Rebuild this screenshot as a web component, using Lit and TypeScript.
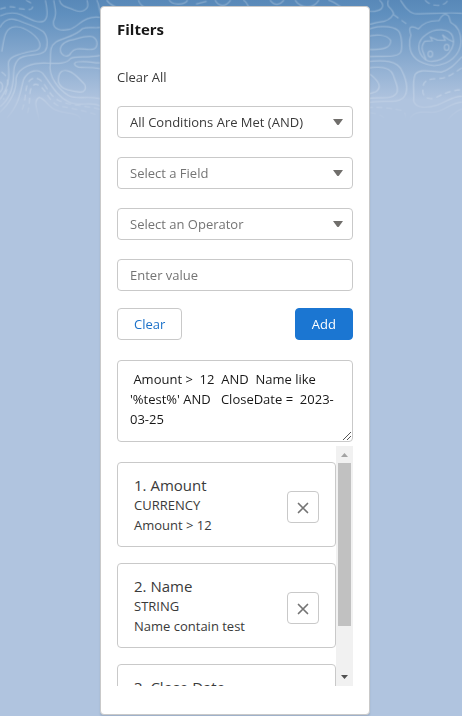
import { LitElement, html, css, svg } from "lit";
import { customElement, property, state } from "lit/decorators.js";

interface Condition {
  label: string;
  type: string;
  summary: string;
}

@customElement("page-backdrop")
export class PageBackdrop extends LitElement {
  static styles = css`
    :host {
      display: block;
      position: absolute;
      inset: 0;
      background: linear-gradient(#5888b8 0, #5f8fbe 14px, #b0c4df 100px);
    }
    .contours {
      display: block;
      width: 100%;
      height: 130px;
      fill: none;
    }
    .dash {
      stroke-dasharray: 18 11;
    }
  `;

  render() {
    return html`<svg class="contours" viewBox="0 0 462 130" preserveAspectRatio="xMidYMin slice" aria-hidden="true">
      <defs>
        <linearGradient id="fade" x1="0" y1="0" x2="0" y2="130" gradientUnits="userSpaceOnUse">
          <stop offset="0" stop-color="#fff" stop-opacity=".28" />
          <stop offset=".7" stop-color="#fff" stop-opacity=".28" />
          <stop offset=".95" stop-color="#fff" stop-opacity="0" />
        </linearGradient>
        <mask id="lines" maskUnits="userSpaceOnUse" x="0" y="0" width="462" height="130">
          <rect width="462" height="130" fill="url(#fade)" />
        </mask>
      </defs>
      <g mask="url(#lines)" stroke="#fff" stroke-width="3.5">
        ${svg`
        <g transform="scale(.33333)">
          <path class="dash" d="M0 27C25 20 38 17 52 25C75 28 100 35 98 16C96 8 84 5 78 0" />
          <path d="M0 48C20 38 45 36 65 45C90 57 112 70 130 64C146 56 142 30 136 0" />
          <path d="M0 82C10 62 28 52 50 60C75 70 108 78 130 95C145 112 144 140 135 153C115 172 75 158 55 178C30 205 50 235 30 280C22 298 10 312 0 320" />
          <path d="M5 155C12 125 10 82 46 80C72 78 120 110 120 137C118 158 95 150 75 158C48 165 22 172 25 195C27 225 32 250 0 298" />
          <path d="M178 0C184 24 206 20 222 30C243 40 267 30 263 10L261 0" />
          <path d="M161 0C165 28 172 38 160 65C158 92 188 92 208 88C235 82 250 45 300 52" />
          <path d="M0 337C32 305 50 270 48 235C55 200 100 188 135 189C165 190 198 194 211 176C225 166 265 175 300 166" />
          <path d="M151 188C152 155 148 140 168 126C190 112 225 110 247 86C266 78 284 86 300 82" />
          <path d="M184 160C174 142 189 127 209 121C230 118 255 105 278 110C297 121 294 146 276 148C253 151 228 137 213 158C207 172 192 171 184 160Z" />
          <path d="M151 190C143 230 178 270 205 286C229 300 258 286 300 296" />
          <path d="M175 245C174 216 187 207 205 213C226 219 236 236 253 252C261 267 252 278 238 276C216 272 182 271 175 245Z" />
          <path d="M300 206C270 200 251 204 235 201C216 195 222 184 240 185C267 182 287 191 300 188" />
          <path d="M20 355C58 313 60 278 70 240C83 210 117 203 132 225C153 254 172 290 205 305C235 322 275 302 300 318" />
          <path class="dash" d="M66 330C83 289 69 240 103 234C133 233 139 278 169 297C199 317 248 314 300 328" />
          <path class="dash" d="M82 340C95 302 80 260 107 252C137 258 139 299 174 317C218 326 250 330 300 348" />
          <path d="M118 370C115 332 96 304 117 292C137 296 144 323 170 331C205 345 249 333 241 372" />
          <path class="dash" d="M4 216C27 230 30 250 10 298" />
          <path d="M0 245C11 253 9 269 0 277M290 0C303 23 292 42 316 58" />
        </g>
        <g transform="translate(100 0) scale(.33333)">
          <path d="M20 0C34 24 52 12 68 40M115 0C124 27 150 26 180 30M207 0C215 15 253 17 263 0M288 12L320 4M345 0C355 21 378 21 392 0M430 0C446 9 444 30 462 35M510 0C524 20 541 14 552 0M585 0C600 23 638 30 657 0M685 0C718 10 738 40 756 35" />
        </g>
        <g transform="translate(360 0) scale(.33333)">
          <path d="M58 0C81 20 63 36 28 34M85 0C77 24 95 20 101 41C93 57 78 65 58 66C40 67 38 75 20 72M121 0C134 20 145 37 163 41C205 44 260 35 306 40" />
          <path class="dash" d="M101 44L140 72M195 0C211 21 254 22 264 0" />
          <path d="M20 110C46 102 80 102 92 121C94 142 72 151 24 148M20 92C38 78 96 73 116 93C126 107 128 148 121 158C107 175 58 166 20 170" />
          <path d="M20 185C70 179 114 180 127 215C141 244 147 277 129 294C107 313 65 297 20 309M20 205C63 197 92 200 100 226C107 248 119 269 108 282C90 302 53 288 20 297M30 222C60 246 65 263 48 275L25 282" />
          <path d="M153 105C144 81 150 74 175 87C189 68 211 61 237 62C244 46 255 36 266 48L272 67C294 78 303 98 303 126C301 164 268 195 222 197C176 191 151 170 149 137C148 125 149 114 153 105Z" />
          <path d="M195 178C169 156 170 122 199 103C225 83 268 85 278 109C290 143 257 181 217 184C208 185 201 182 195 178Z" />
          <path d="M188 153C184 142 187 133 194 124L217 122L211 111L232 120L256 121L247 104L265 118L281 126M188 153L198 179" />
          <ellipse cx="211" cy="162" rx="7" ry="9" />
          <ellipse cx="260" cy="142" rx="7" ry="9" />
          <path d="M306 170C284 193 269 210 244 216C213 215 181 205 166 222C155 249 164 271 161 303C167 325 199 325 232 315C261 305 282 286 306 289" />
          <path class="dash" d="M306 204C276 222 260 236 232 236C204 236 186 245 190 263C182 286 201 302 226 294C251 280 276 271 306 269" />
          <path d="M150 370C146 338 177 334 211 337C250 340 266 308 306 306M258 370C269 347 285 335 306 326" />
          <path class="dash" d="M20 323C60 319 87 325 114 329C137 331 141 347 133 362M30 338C57 342 73 348 78 363" />
        </g>`}
      </g>
    </svg>`;
  }
}

@customElement("filter-select")
export class FilterSelect extends LitElement {
  @property() label = "";
  @property({ type: Boolean }) placeholder = false;
  @property({ attribute: false }) options: string[] = [];

  static styles = css`
    :host {
      display: grid;
      align-items: center;
    }
    .control,
    .caret {
      grid-area: 1 / 1;
    }
    .control {
      appearance: none;
      width: 100%;
      height: 32px;
      margin: 0;
      padding: 0 32px 0 12px;
      border: 1px solid #c9c9c9;
      border-radius: 4px;
      background: #fff;
      color: #3a3a3a;
      font: inherit;
    }
    .empty {
      color: #747474;
    }
    .caret {
      justify-self: end;
      width: 10px;
      height: 6px;
      margin-right: 10px;
      fill: #706e6b;
      pointer-events: none;
    }
  `;

  render() {
    return html`
      <select class="control ${this.placeholder ? "empty" : ""}" aria-label=${this.label}>
        ${this.options.map((o) => html`<option>${o}</option>`)}
      </select>
      <svg class="caret" viewBox="0 0 10 6" aria-hidden="true"><path d="M0 0H10L6 5.5Q5 6.5 4 5.5Z" /></svg>
    `;
  }
}

@customElement("condition-card")
export class ConditionCard extends LitElement {
  @property({ type: Number }) index = 1;
  @property({ attribute: false }) condition!: Condition;

  static styles = css`
    :host {
      display: flex;
      align-items: center;
      justify-content: space-between;
      flex: none;
      box-sizing: border-box;
      height: 85px;
      padding: 4px 16px 0;
      border: 1px solid #c9c9c9;
      border-radius: 4px;
      background: #fff;
      color: #3a3a3a;
    }
    .details {
      padding-bottom: 4px;
    }
    .name {
      margin: 0;
      font-size: 15px;
      font-weight: 400;
      line-height: 20px;
    }
    .line {
      margin: 0;
      line-height: 20px;
    }
    .remove {
      display: grid;
      place-items: center;
      width: 32px;
      height: 32px;
      padding: 0;
      border: 1px solid #c9c9c9;
      border-radius: 4px;
      background: #fff;
    }
    .cross {
      width: 12px;
      height: 12px;
      margin-top: 2px;
      fill: none;
      stroke: #747474;
      stroke-width: 1.7;
      stroke-linecap: round;
    }
  `;

  render() {
    return html`
      <div class="details">
        <h3 class="name">${this.index}. ${this.condition.label}</h3>
        <p class="line">${this.condition.type}</p>
        <p class="line">${this.condition.summary}</p>
      </div>
      <button class="remove" aria-label="Remove ${this.condition.label}">
        <svg class="cross" viewBox="0 0 12 12" aria-hidden="true"><path d="M1.5 1.5L10.5 10.5M10.5 1.5L1.5 10.5" /></svg>
      </button>
    `;
  }
}

@customElement("app-root")
export class AppRoot extends LitElement {
  @state() private conditions: Condition[] = [
    { label: "Amount", type: "CURRENCY", summary: "Amount > 12" },
    { label: "Name", type: "STRING", summary: "Name contain test" },
    { label: "Close Date", type: "DATE", summary: "CloseDate = 2023-03-25" },
  ];

  static styles = css`
    :host {
      display: block;
      position: relative;
      box-sizing: border-box;
      min-height: 100vh;
      padding: 6px 92px 1px 100px;
      font: 13px/20px "Open Sans", "Noto Sans", sans-serif;
      color: #3a3a3a;
    }
    .panel {
      position: relative;
      display: flex;
      flex-direction: column;
      padding: 12px 16px 28px;
      border: 1px solid #c9c9c9;
      border-radius: 4px;
      background: #fff;
      box-shadow: 0 2px 2px rgba(0, 0, 0, 0.1);
    }
    .title {
      margin: 0;
      color: #181818;
      font-size: 15px;
      font-weight: 700;
      line-height: 20px;
    }
    .clear-all {
      margin: 28px 0 0;
    }
    .fields {
      display: grid;
      gap: 19px;
      margin-top: 19px;
    }
    .value {
      box-sizing: border-box;
      width: 100%;
      height: 32px;
      padding: 0 12px;
      border: 1px solid #c9c9c9;
      border-radius: 4px;
      font: inherit;
    }
    .value::placeholder {
      color: #747474;
      opacity: 1;
    }
    .actions {
      display: flex;
      justify-content: space-between;
      margin-top: 17px;
    }
    .button {
      height: 32px;
      padding: 0 16px;
      border: 1px solid #c9c9c9;
      border-radius: 4px;
      background: #fff;
      color: #1b71c9;
      font: inherit;
    }
    .brand {
      border-color: #1b76d2;
      background: #1b76d2;
      color: #fff;
    }
    .query {
      display: grid;
      margin-top: 20px;
    }
    .text,
    .grip {
      grid-area: 1 / 1;
    }
    .text {
      box-sizing: border-box;
      width: 100%;
      height: 82px;
      padding: 8px 12px;
      border: 1px solid #c9c9c9;
      border-radius: 4px;
      background: #fff;
      color: #181818;
      font: inherit;
      resize: none;
      overflow: hidden;
    }
    .grip {
      place-self: end;
      width: 10px;
      height: 10px;
      margin: 1px;
      stroke: #555;
      fill: none;
      pointer-events: none;
    }
    .scroller {
      display: flex;
      height: 240px;
      margin-top: 4px;
    }
    .list {
      display: flex;
      flex: 1;
      flex-direction: column;
      gap: 16px;
      box-sizing: border-box;
      padding-top: 16px;
      overflow-y: auto;
      scrollbar-width: none;
    }
    .track {
      display: flex;
      flex-direction: column;
      width: 17px;
      background: #f1f1f1;
    }
    .arrow {
      width: 17px;
      height: 17px;
      fill: #505050;
    }
    .off {
      fill: #a3a3a3;
    }
    .thumb {
      height: 163px;
      margin: 0 2px auto;
      background: #c1c1c1;
    }
  `;

  render() {
    return html`
      <page-backdrop></page-backdrop>
      <main class="panel">
        <h2 class="title">Filters</h2>
        <p class="clear-all">Clear All</p>
        <div class="fields">
          <filter-select label="Match" .options=${["All Conditions Are Met (AND)"]}></filter-select>
          <filter-select label="Field" placeholder .options=${["Select a Field"]}></filter-select>
          <filter-select label="Operator" placeholder .options=${["Select an Operator"]}></filter-select>
          <input class="value" type="text" placeholder="Enter value" aria-label="Value" />
        </div>
        <div class="actions">
          <button class="button">Clear</button>
          <button class="button brand">Add</button>
        </div>
        <div class="query">
          <textarea
            class="text"
            aria-label="Query"
            spellcheck="false"
            .value=${" Amount >  12  AND  Name like '%test%' AND   CloseDate =  2023-03-25"}
          ></textarea>
          <svg class="grip" viewBox="0 0 10 10" aria-hidden="true"><path d="M1 9L9 1M5 9L9 5" /></svg>
        </div>
        <div class="scroller">
          <div class="list">
            ${this.conditions.map(
              (c, i) => html`<condition-card .index=${i + 1} .condition=${c}></condition-card>`
            )}
          </div>
          <div class="track" aria-hidden="true">
            <svg class="arrow off" viewBox="0 0 17 17"><path d="M5 11L8.5 7L12 11Z" /></svg>
            <div class="thumb"></div>
            <svg class="arrow" viewBox="0 0 17 17"><path d="M5 6L8.5 10L12 6Z" /></svg>
          </div>
        </div>
      </main>
    `;
  }
}
